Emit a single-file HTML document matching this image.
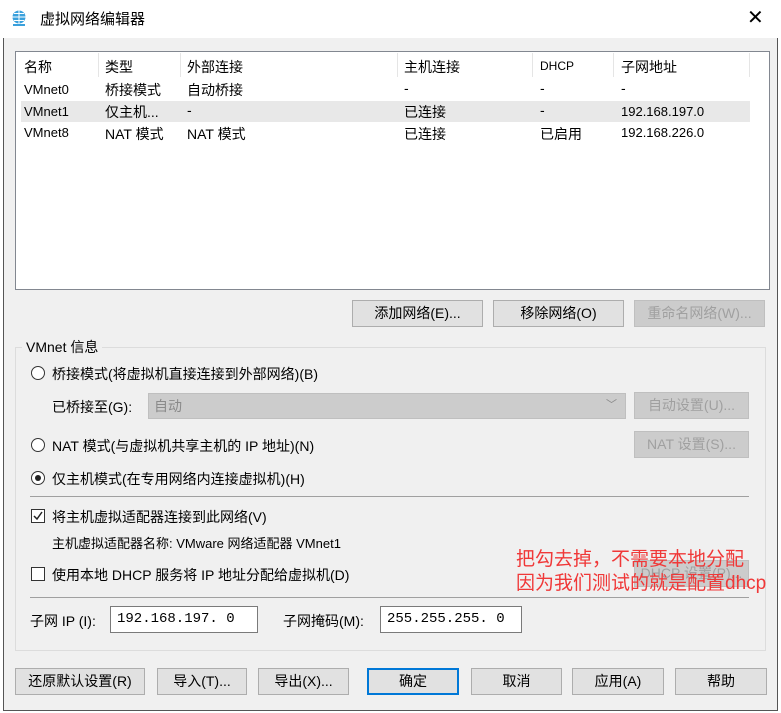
<!DOCTYPE html>
<html><head><meta charset="utf-8"><style>
*{box-sizing:border-box;margin:0;padding:0}
body{width:781px;height:713px;background:#fff;font-family:"Liberation Sans","Noto Sans CJK SC",sans-serif;font-size:14px;color:#000;position:relative;overflow:hidden}
.a{position:absolute;white-space:nowrap}
.win{position:absolute;left:3px;top:0;width:775px;height:711px;background:#f0f0f0;border:1px solid #555;border-top:none}
.bt{position:absolute;height:27px;background:#e1e1e1;border:1px solid #adadad;text-align:center;line-height:25px;font-size:14px}
.dis{color:#a0a0a0;background:#cccccc;border-color:#bfbfbf}
.rad{position:absolute;width:14px;height:14px;border:1px solid #333;border-radius:50%;background:#fff}
.chk{position:absolute;width:14px;height:14px;border:1px solid #333;background:#fff}
.inp{position:absolute;height:27px;background:#fff;border:1px solid #7a7a7a;font-family:"Liberation Mono",monospace;font-size:14px;line-height:25px;padding-left:6px}
</style></head><body>
<div class="win"></div>
<div class="a" style="left:0;top:0;width:781px;height:38px;background:#fff"></div>
<svg class="a" style="left:10px;top:9px" width="18" height="18" viewBox="0 0 18 18"><circle cx="9" cy="8" r="6.5" fill="#3aa0dc"/><path d="M2.5 8h13M9 1.5v13M4 4.5h10M4 11.5h10" stroke="#fff" stroke-width="1"/><rect x="3" y="15" width="12" height="2" fill="#3aa0dc"/></svg>
<div class="a" style="left:40px;top:8px;font-size:15px">虚拟网络编辑器</div>
<div class="a" style="left:747px;top:5px;font-size:20px;font-weight:300">✕</div>

<div class="a" style="left:15px;top:51px;width:755px;height:239px;background:#fff;border:1px solid #828790"></div>
<div class="a" style="left:98px;top:53px;width:1px;height:24px;background:#e5e5e5"></div>
<div class="a" style="left:180px;top:53px;width:1px;height:24px;background:#e5e5e5"></div>
<div class="a" style="left:397px;top:53px;width:1px;height:24px;background:#e5e5e5"></div>
<div class="a" style="left:532px;top:53px;width:1px;height:24px;background:#e5e5e5"></div>
<div class="a" style="left:613px;top:53px;width:1px;height:24px;background:#e5e5e5"></div>
<div class="a" style="left:749px;top:53px;width:1px;height:24px;background:#e5e5e5"></div>
<div class="a" style="left:24px;top:57px">名称</div><div class="a" style="left:105px;top:57px">类型</div><div class="a" style="left:187px;top:57px">外部连接</div><div class="a" style="left:404px;top:57px">主机连接</div><div class="a" style="left:540px;top:59px;font-size:12px">DHCP</div><div class="a" style="left:621px;top:57px">子网地址</div>
<div class="a" style="left:21px;top:101px;width:729px;height:21px;background:#e8e8e8"></div>
<div class="a" style="left:24px;top:82px;font-size:13px">VMnet0</div><div class="a" style="left:105px;top:80px">桥接模式</div><div class="a" style="left:187px;top:80px">自动桥接</div><div class="a" style="left:404px;top:80px">-</div><div class="a" style="left:540px;top:80px">-</div><div class="a" style="left:621px;top:80px">-</div>
<div class="a" style="left:24px;top:104px;font-size:13px">VMnet1</div><div class="a" style="left:105px;top:102px">仅主机...</div><div class="a" style="left:187px;top:102px">-</div><div class="a" style="left:404px;top:102px">已连接</div><div class="a" style="left:540px;top:102px">-</div><div class="a" style="left:621px;top:104px;font-size:13px">192.168.197.0</div>
<div class="a" style="left:24px;top:125px;font-size:13px">VMnet8</div><div class="a" style="left:105px;top:124px">NAT 模式</div><div class="a" style="left:187px;top:124px">NAT 模式</div><div class="a" style="left:404px;top:124px">已连接</div><div class="a" style="left:540px;top:124px">已启用</div><div class="a" style="left:621px;top:125px;font-size:13px">192.168.226.0</div>

<div class="bt" style="left:352px;top:300px;width:131px">添加网络(E)...</div>
<div class="bt" style="left:493px;top:300px;width:131px">移除网络(O)</div>
<div class="bt dis" style="left:634px;top:300px;width:131px">重命名网络(W)...</div>

<div class="a" style="left:15px;top:347px;width:751px;height:304px;border:1px solid #dcdcdc"></div>
<div class="a" style="left:22px;top:337px;background:#f0f0f0;padding:0 4px">VMnet 信息</div>

<div class="rad" style="left:31px;top:366px"></div><div class="a" style="left:52px;top:364px">桥接模式(将虚拟机直接连接到外部网络)(B)</div>
<div class="a" style="left:52px;top:397px">已桥接至(G):</div>
<div class="a" style="left:148px;top:393px;width:478px;height:26px;background:#cccccc;border:1px solid #bfbfbf;color:#8a8a8a;padding-left:5px;line-height:24px">自动<span style="position:absolute;right:8px;top:-1px;font-size:11px">﹀</span></div>
<div class="bt dis" style="left:634px;top:392px;width:115px">自动设置(U)...</div>
<div class="rad" style="left:31px;top:438px"></div><div class="a" style="left:52px;top:436px">NAT 模式(与虚拟机共享主机的 IP 地址)(N)</div>
<div class="bt dis" style="left:634px;top:431px;width:115px">NAT 设置(S)...</div>
<div class="rad" style="left:31px;top:471px"><div style="position:absolute;left:3px;top:3px;width:6px;height:6px;border-radius:50%;background:#222"></div></div><div class="a" style="left:52px;top:469px">仅主机模式(在专用网络内连接虚拟机)(H)</div>
<div class="a" style="left:30px;top:496px;width:719px;height:1px;background:#a0a0a0"></div>
<div class="chk" style="left:31px;top:509px"><svg width="12" height="12" style="position:absolute;left:0;top:0"><path d="M2 6l3 3 5-7" stroke="#222" stroke-width="1.5" fill="none"/></svg></div><div class="a" style="left:52px;top:507px">将主机虚拟适配器连接到此网络(V)</div>
<div class="a" style="left:52px;top:533px;font-size:13px">主机虚拟适配器名称: VMware 网络适配器 VMnet1</div>
<div class="chk" style="left:31px;top:567px"></div><div class="a" style="left:52px;top:565px">使用本地 DHCP 服务将 IP 地址分配给虚拟机(D)</div>
<div class="bt dis" style="left:634px;top:560px;width:115px">DHCP 设置(P)...</div>
<div class="a" style="left:516px;top:548px;font-size:19px;color:#f03838;line-height:24px">把勾去掉，不需要本地分配<br>因为我们测试的就是配置dhcp</div>
<div class="a" style="left:30px;top:597px;width:719px;height:1px;background:#a0a0a0"></div>
<div class="a" style="left:30px;top:611px">子网 IP (I):</div>
<div class="inp" style="left:110px;top:606px;width:148px">192.168.197. 0</div>
<div class="a" style="left:283px;top:611px">子网掩码(M):</div>
<div class="inp" style="left:380px;top:606px;width:142px">255.255.255. 0</div>

<div class="bt" style="left:15px;top:668px;width:130px">还原默认设置(R)</div>
<div class="bt" style="left:157px;top:668px;width:90px">导入(T)...</div>
<div class="bt" style="left:258px;top:668px;width:91px">导出(X)...</div>
<div class="bt" style="left:367px;top:668px;width:92px;border:2px solid #0078d7;line-height:23px">确定</div>
<div class="bt" style="left:471px;top:668px;width:91px">取消</div>
<div class="bt" style="left:572px;top:668px;width:92px">应用(A)</div>
<div class="bt" style="left:675px;top:668px;width:92px">帮助</div>
</body></html>
